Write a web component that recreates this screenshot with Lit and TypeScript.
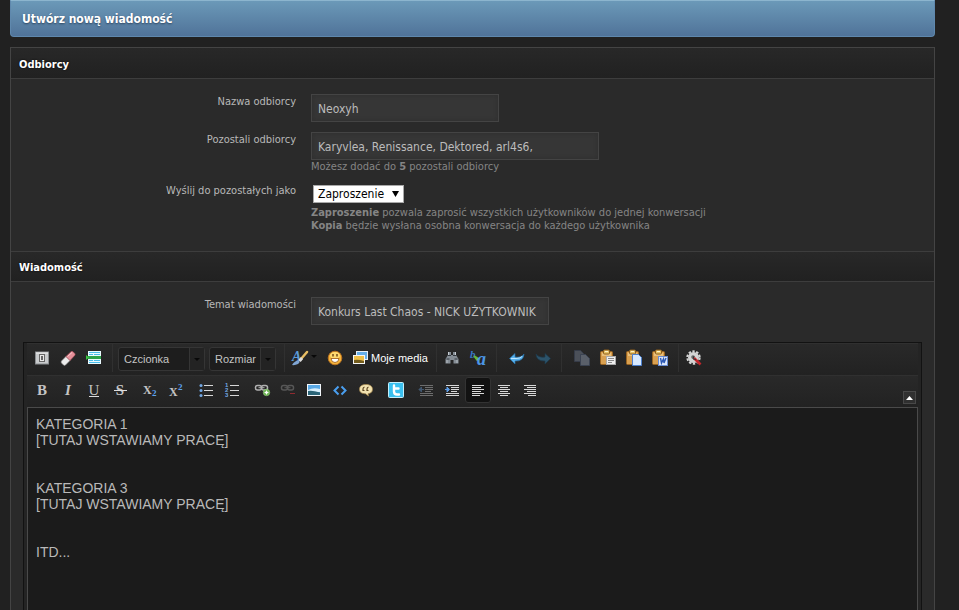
import { LitElement, html, css, svg, nothing, SVGTemplateResult, TemplateResult } from "lit";
import { customElement, property } from "lit/decorators.js";

const lines = (xs: number[][], color = "#d8d8d8") =>
  xs.map(([x, y, w]) => svg`<rect x=${x} y=${y} width=${w} height="1" fill=${color} />`);

const glyph = (t: string, weight = "normal", slant = "normal") =>
  svg`<text x="10" y="15" text-anchor="middle" font-family="Liberation Serif, serif" font-size="15" fill="#c4c4c4" font-weight=${weight} font-style=${slant}>${t}</text>`;

const clipboard = svg`
  <rect x="2.5" y="3.5" width="12" height="13" rx="1" fill="#d9a050" stroke="#9a6420" />
  <rect x="4" y="5" width="9" height="3" fill="#e9c07c" />
  <rect x="5.5" y="2" width="6" height="4" rx="1" fill="#e8c468" stroke="#8a5c1c" />
  <rect x="7" y="3" width="3" height="1" fill="#fff3c8" />`;

const chain = (c: string) => svg`
  <rect x="3.500" y="5.500" width="6" height="4.500" rx="2" fill="none" stroke=${c} stroke-width="1.500" />
  <rect x="9.500" y="5.500" width="6" height="4.500" rx="2" fill="none" stroke=${c} stroke-width="1.500" />
  <path d="M6.500 7.700h6" stroke=${c} />`;

const icons: Record<string, SVGTemplateResult> = {
  switch: svg`<rect x="3.5" y="4" width="13" height="12" fill="#c8cacc" stroke="#8b8e91" />
    <rect x="4" y="4.500" width="12" height="1" fill="#f4f4f4" />
    <rect x="7.500" y="6.500" width="5" height="7" fill="#e8e8e8" stroke="#666" />
    <rect x="9" y="8" width="2" height="4" fill="#666" />`,
  eraser: svg`<path d="M3.500 13 8 8.500l4 4-4.500 4.500q-1 .8-2 0l-2-2q-.8-1 0-2z" fill="#ececec" stroke="#999" stroke-width=".6" />
    <path d="M8 8.500 13 3.700q1-.8 2 0l1.700 1.700q.9 1 0 2L12 12.500z" fill="#e58f98" stroke="#b2525f" stroke-width=".6" />
    <path d="m9.500 8.500 4.500-4" stroke="#f8c9cd" />`,
  lines: svg`<rect x="4" y="3" width="13" height="13" fill="#eafaff" />
    <path d="M5 4.500h11M5 6.500h4M10 6.500h6M5 12.500h4M10 12.500h6M5 14.500h11" stroke="#49bde9" />
    <rect x="4" y="8" width="13" height="3" fill="#2ca34a" />
    <path d="M2 7v5l3-2.500z" fill="#37c53f" />`,
  bold: glyph("B", "bold"),
  italic: glyph("I", "bold", "italic"),
  underline: svg`${glyph("U")}<rect x="5" y="16" width="10" height="1" fill="#ddd" />`,
  strike: svg`${glyph("S", "bold")}<rect x="4" y="10" width="13" height="1" fill="#ddd" />`,
  sub: svg`<text x="3" y="14" font-family="Liberation Serif, serif" font-weight="bold" font-size="12" fill="#c4c4c4">X</text>
    <text x="12" y="16" font-family="Liberation Serif, serif" font-weight="bold" font-size="9" fill="#5da2ee">2</text>`,
  sup: svg`<text x="3" y="16" font-family="Liberation Serif, serif" font-weight="bold" font-size="12" fill="#c4c4c4">X</text>
    <text x="12" y="10" font-family="Liberation Serif, serif" font-weight="bold" font-size="9" fill="#5da2ee">2</text>`,
  ul: svg`<circle cx="5" cy="5.500" r="1.500" fill="#73a8e4" /><circle cx="5" cy="10.500" r="1.500" fill="#73a8e4" /><circle cx="5" cy="15.500" r="1.500" fill="#73a8e4" />
    ${lines([[8, 5, 9], [8, 10, 9], [8, 15, 9]])}`,
  ol: svg`<g font-family="Liberation Sans, sans-serif" font-size="6" font-weight="bold" fill="#73a8e4"><text x="3" y="7">1</text><text x="3" y="12">2</text><text x="3" y="17">3</text></g>
    ${lines([[8, 5, 9], [8, 10, 9], [8, 15, 9]])}`,
  link: svg`${chain("#b0b0b0")}<circle cx="14.500" cy="12.500" r="3.200" fill="#57a83a" stroke="#a4d890" stroke-width=".6" /><path d="M12.500 12.500h4M14.500 10.500v4" stroke="#fff" stroke-width="1.300" />`,
  unlink: svg`<g opacity=".4">${chain("#a0a0a0")}</g><rect x="12" y="13" width="5" height="1" fill="#8f2a30" />`,
  image: svg`<rect x="3" y="4" width="14" height="12" fill="#f2f6fa" />
    <rect x="4" y="5" width="12" height="10" fill="#59a9e6" />
    <path d="M4 10q5-3 12-1v3H4z" fill="#d9effc" /><path d="M4 11q4-1 12 1.500v2.500H4z" fill="#2b6477" />`,
  code: svg`<path d="m8.500 6.500-4 4 4 4M11.500 6.500l4 4-4 4" fill="none" stroke="#4a9ff0" stroke-width="2" />`,
  quote: svg`<path d="M10 4.500c4 0 6.500 1.800 6.500 4.800s-2 4-4.500 4.400l.5 2.300-3-2.300C6 13.700 3.500 12.500 3.500 9.300S6 4.500 10 4.500z" fill="#f2e2b0" stroke="#a98a4c" stroke-width=".7" />
    <path d="M8.500 7q-1.500.5-1.500 2v1.500h1.500M12.500 7q-1.500.5-1.500 2v1.500h1.500" fill="none" stroke="#5a4420" stroke-width="1.200" />`,
  twitter: svg`<rect x="2.500" y="2.500" width="15" height="15" rx="1" fill="#3bc0ef" stroke="#c4effc" />
    <path d="M8 5.500v6q0 3 3 3h2M8 8.500h4.500" fill="none" stroke="#fff" stroke-width="2.400" stroke-linecap="round" />`,
  outdent: svg`<g opacity=".4">${lines([[4, 5, 13], [9, 7, 8], [9, 9, 8], [9, 11, 6], [4, 13, 13], [4, 15, 13]])}<path d="M3 9.500h5M5.500 7v5L3 9.500z" stroke="#6ba2de" fill="#6ba2de" /></g>`,
  indent: svg`${lines([[4, 5, 13], [9, 7, 8], [9, 9, 8], [9, 11, 6], [4, 13, 13], [4, 15, 13]])}<path d="M3 9.500h4M5 7l2.500 2.500L5 12z" stroke="#5c9be4" fill="#5c9be4" />`,
  left: svg`${lines([[4, 5, 12], [4, 7, 9], [4, 9, 12], [4, 11, 9], [4, 13, 12], [4, 15, 8]])}`,
  center: svg`${lines([[4, 5, 12], [6, 7, 8], [4, 9, 12], [6, 11, 8], [4, 13, 12], [6, 15, 8]])}`,
  right: svg`${lines([[4, 5, 12], [7, 7, 9], [4, 9, 12], [7, 11, 9], [4, 13, 12], [8, 15, 8]])}`,
  color: svg`<text x="2" y="13" font-family="Liberation Serif, serif" font-style="italic" font-weight="bold" font-size="14" fill="#5b9bd9">A</text>
    <path d="m17 4-6 7" stroke="#e8bd63" stroke-width="2.500" stroke-linecap="round" /><path d="m12 10-2.500 3" stroke="#ddd" stroke-width="3" />
    <path d="M2 17q3-5 7-4.500 1.500 1.500-1 3.500-3 1.500-6 1z" fill="#7fa5d4" />`,
  smile: svg`<circle cx="10" cy="10" r="6.800" fill="#f6b53c" stroke="#bd7420" /><ellipse cx="10" cy="7.500" rx="5" ry="3.500" fill="#ffda70" />
    <path d="M8 6v2.500M12 6v2.500" stroke="#6a4010" stroke-width="1.400" /><path d="M6 10.500h8q-.5 4-4 4t-4-4z" fill="#fff" stroke="#99560e" stroke-width=".8" />`,
  media: svg`<rect x="5.500" y="3.500" width="11" height="8" fill="#65aee8" stroke="#e8eef4" />
    <rect x="2.500" y="7.500" width="11" height="8" fill="#efc04a" stroke="#f6f6f6" /><path d="M3 12q4-1 10 1v2H3z" fill="#735c1c" />`,
  find: svg`<path d="M6 4h3v3h2V4h3v3l2.500 4v4.500h-5V12h-3v3.500h-5V11L6 7z" fill="#858d95" /><path d="M6 7.500h3M11 7.500h3M4.500 11h3M12.500 11h3" stroke="#343a40" />
    <path d="M6.500 4v3M13.500 4v3" stroke="#c5ccd2" /><path d="M5 12v3M15 12v3" stroke="#b4bbc1" />`,
  replace: svg`<text x="2" y="10" font-family="Liberation Serif, serif" font-style="italic" font-weight="bold" font-size="11" fill="#3977c8">b</text>
    <path d="m6 8 5 3-2 1z" stroke="#65b83d" stroke-width="1.500" />
    <text x="9" y="17" font-family="Liberation Serif, serif" font-style="italic" font-weight="bold" font-size="18" fill="#4c96e6">a</text>`,
  undo: svg`<path d="M2.500 10.500 8 5.500V9q6 1 9-3-.5 7.500-9 7v3z" fill="#58b1ec" stroke="#2670a8" stroke-width=".7" /><path d="M4 10.500h5q4 0 6-2" stroke="#bde5ff" fill="none" />`,
  redo: svg`<path d="M17.500 10.500 12 5.500V9q-6 1-9-3 .5 7.500 9 7v3z" fill="#2c536a" stroke="#1c3a4c" stroke-width=".7" />`,
  copy: svg`<path d="M2.500 2.500h6l3 3v8h-9z" fill="#4b5059" stroke="#363c49" /><path d="M8.500 6.500h5l4 4v7h-9z" fill="#5a606a" stroke="#3b4352" />`,
  paste: svg`${clipboard}<rect x="8.500" y="8.500" width="9" height="8" fill="#eee" stroke="#aaa" /><path d="M10 10.500h6M10 12.500h6M10 14.500h4" stroke="#888" />`,
  pasteText: svg`${clipboard}<path d="M8.500 6.500h6l3 3v8h-9z" fill="#d7e9ff" stroke="#4c80ce" />`,
  pasteWord: svg`${clipboard}<rect x="8.500" y="8.500" width="9" height="9" fill="#dce8fc" stroke="#6a8cd2" /><path d="m10.500 10 1 5 2-4 .5 4 2-5" fill="none" stroke="#2c58b4" stroke-width="1.400" />`,
  gear: svg`<circle cx="9.500" cy="9.500" r="5.500" fill="#d4d4d4" /><circle cx="9.500" cy="9.500" r="6.200" fill="none" stroke="#d4d4d4" stroke-width="2" stroke-dasharray="2.400 1.500" />
    <circle cx="9" cy="9" r="1.800" fill="#666" /><path d="m10 10 6.500 6.500" stroke="#c3262c" stroke-width="2.600" /><path d="m10 8-1 3 3 .5" stroke="#333" fill="none" />`,
};

@customElement("tool-button")
export class ToolButton extends LitElement {
  @property() icon = "";
  @property() name = "";
  @property() text = "";
  @property({ type: Boolean }) menu = false;
  @property({ type: Boolean }) active = false;

  static styles = css`
    :host { display: block; flex: none; }
    button {
      display: flex; align-items: center; justify-content: center;
      min-width: 26px; height: 26px; padding: 0 2px; border: 1px solid transparent; border-radius: 3px;
      background: none; color: #fff; font: 11px "Liberation Sans", Arial, sans-serif; white-space: nowrap;
    }
    button.active { background: #121212; border-color: #333; }
    svg { flex: none; display: block; }
  `;

  render() {
    return html`<button type="button" class=${this.active ? "active" : ""} aria-label=${this.name}>
      <svg width="20" height="20" viewBox="0 0 20 20">${icons[this.icon]}</svg>${this.text || nothing}
      ${this.menu ? html`<svg width="9" height="20" viewBox="0 0 9 20"><path d="M1 7h6L4 10z" fill="#080808" /></svg>` : nothing}
    </button>`;
  }
}

const tool = (icon: string, name: string, active = false): TemplateResult =>
  html`<tool-button icon=${icon} name=${name} ?active=${active}></tool-button>`;

@customElement("app-root")
export class AppRoot extends LitElement {
  static styles = css`
    * { box-sizing: border-box; }
    :host {
      display: flex; flex-direction: column; min-height: 100vh; padding: 0 24px 0 10px;
      background: #212121; color: #b8b8b8;
      font: 11px/14px "DejaVu Sans Condensed", Tahoma, sans-serif;
    }
    h1, h2 { margin: 0; color: #fff; font-weight: bold; }
    h1 {
      height: 37px; padding: 0 11px; border: 1px solid #5f88ad; border-top-color: #8cb5ce; border-radius: 0 0 4px 4px;
      background: linear-gradient(#6b99b8, #507399); font-size: 12px; line-height: 36px; text-shadow: 0 1px 2px #2c4560;
    }
    h2 {
      height: 31px; padding: 0 8px; border-bottom: 1px solid #3d3d3d;
      background: linear-gradient(#282828, #212121); font-size: 11px; line-height: 33px; text-shadow: 0 0 2px #000;
    }
    form {
      flex: 1; display: flex; flex-direction: column; margin-top: 10px;
      border: 1px solid #444; border-bottom: 0; background: #2a2a2a;
    }
    .fields { display: grid; gap: 10px; padding: 15px 0 19px; }
    .subject { padding-bottom: 17px; }
    .next { border-top: 1px solid #3d3d3d; line-height: 31px; }
    .row { display: grid; grid-template-columns: 285px minmax(0, 1fr); column-gap: 15px; }
    .row > label { padding-top: 1px; text-align: right; }
    .box {
      display: block; width: 188px; max-width: 100%; height: 28px; padding: 2px 6px 0; border: 1px solid #444;
      background: #363636; box-shadow: inset 0 0 4px #2e2e2e; color: #bcbcbc;
      font: 12px "DejaVu Sans Condensed", Tahoma, sans-serif;
    }
    .long { width: 288px; }
    .medium { width: 238px; }
    .hint { margin: 0; color: #858585; line-height: 13px; }
    .pick { display: inline-grid; align-items: center; vertical-align: top; }
    .pick > * { grid-area: 1 / 1; }
    .pick select { appearance: none; border: 1px solid #a9a9a9; }
    .pick svg { justify-self: end; pointer-events: none; }
    .mode { margin: 2px 2px 3px; width: 91px; }
    .mode select { height: 18px; padding: 0 4px; background: #fff; color: #000; font: 12px "DejaVu Sans Condensed", Tahoma, sans-serif; }
    .mode svg { margin-right: 5px; }
    .editor {
      flex: 1; display: flex; flex-direction: column; margin: 0 12px; padding: 0 3px;
      border: 1px solid #121212; border-bottom: 0; background: #242424;
    }
    .bar { display: flex; align-items: center; height: 32px; padding: 0 0 3px 2px; background: linear-gradient(#292929, #222); border-top: 1px solid #303030; }
    .second { gap: 4px; }
    .group { display: flex; align-items: center; }
    .first .group { height: 28px; padding: 0 5px 0 2px; border-right: 1px solid #303030; }
    .first .group:first-child { padding: 0 5px 0 0; }
    .first .group:last-child { border: 0; }
    .first .combos { gap: 4px; padding: 2px 8px 0 5px; }
    .first .spaced { padding-left: 7px; }
    .combo { width: 87px; }
    .combo.size { width: 67px; }
    .combo select {
      height: 24px; padding: 0 5px; border-color: #353535; border-radius: 3px;
      background: #1d1d1d; color: #c4c4c4; font: 11px "Liberation Sans", Arial, sans-serif;
    }
    .combo svg { margin-right: 1px; }
    .collapse {
      display: grid; place-items: center; align-self: flex-end; margin-left: auto;
      width: 13px; height: 13px; padding: 0; border: 1px solid #484848; background: #303030;
    }
    .second { padding-right: 2px; }
    textarea {
      flex: 1; min-height: 160px; width: 100%; margin: 0; padding: 8px; border: 1px solid #4a4a4a; border-bottom: 0; resize: none;
      background: #1b1b1b; color: #b9b9b9; font: 14px/16px "Liberation Sans", Arial, sans-serif;
    }
  `;

  private combo(label: string, cls: string) {
    return html`<span class="pick combo ${cls}">
      <select aria-label=${label}><option>${label}</option></select>
      <svg width="15" height="22" viewBox="0 0 15 22"><rect width="15" height="22" fill="#232323" /><path d="M.5 0v22" stroke="#353535" /><path d="M5 10h6l-3 3z" fill="#080808" /></svg>
    </span>`;
  }

  render() {
    return html`
      <h1>Utwórz nową wiadomość</h1>
      <form>
        <h2>Odbiorcy</h2>
        <div class="fields">
          <div class="row">
            <label for="to">Nazwa odbiorcy</label>
            <div><input class="box" id="to" type="text" value="Neoxyh" /></div>
          </div>
          <div class="row">
            <label for="others">Pozostali odbiorcy</label>
            <div>
              <input class="box long" id="others" type="text" value="Karyvlea, Renissance, Dektored, arl4s6," />
              <p class="hint">Możesz dodać do <b>5</b> pozostali odbiorcy</p>
            </div>
          </div>
          <div class="row">
            <label for="mode">Wyślij do pozostałych jako</label>
            <div>
              <span class="pick mode">
                <select id="mode"><option>Zaproszenie</option><option>Kopia</option></select>
                <svg width="8" height="8" viewBox="0 0 8 8"><path d="M1 1h7L4.500 7z" fill="#000" /></svg>
              </span>
              <p class="hint"><b>Zaproszenie</b> pozwala zaprosić wszystkich użytkowników do jednej konwersacji</p>
              <p class="hint"><b>Kopia</b> będzie wysłana osobna konwersacja do każdego użytkownika</p>
            </div>
          </div>
        </div>
        <h2 class="next">Wiadomość</h2>
        <div class="fields subject">
          <div class="row">
            <label for="subject">Temat wiadomości</label>
            <div><input class="box medium" id="subject" type="text" value="Konkurs Last Chaos - NICK UŻYTKOWNIK" /></div>
          </div>
        </div>
        <div class="editor">
          <div class="bar first">
            <div class="group">${tool("switch", "Tryb edytora")}${tool("eraser", "Usuń formatowanie")}${tool("lines", "Wstaw linię")}</div>
            <div class="group combos">${this.combo("Czcionka", "")}${this.combo("Rozmiar", "size")}</div>
            <div class="group">
              <tool-button icon="color" name="Kolor tekstu" menu></tool-button>
              ${tool("smile", "Emotikony")}
              <tool-button icon="media" name="Moje media" text="Moje media"></tool-button>
            </div>
            <div class="group">${tool("find", "Znajdź")}${tool("replace", "Zamień")}</div>
            <div class="group spaced">${tool("undo", "Cofnij")}${tool("redo", "Ponów")}</div>
            <div class="group spaced">${tool("copy", "Kopiuj")}${tool("paste", "Wklej")}${tool("pasteText", "Wklej jako tekst")}${tool("pasteWord", "Wklej z Worda")}</div>
            <div class="group">${tool("gear", "Narzędzia")}</div>
          </div>
          <div class="bar second">
            <div class="group">${tool("bold", "Pogrubienie")}${tool("italic", "Kursywa")}${tool("underline", "Podkreślenie")}${tool("strike", "Przekreślenie")}</div>
            <div class="group">${tool("sub", "Indeks dolny")}${tool("sup", "Indeks górny")}</div>
            <div class="group">${tool("ul", "Lista punktowana")}${tool("ol", "Lista numerowana")}</div>
            <div class="group">${tool("link", "Wstaw odnośnik")}${tool("unlink", "Usuń odnośnik")}${tool("image", "Obraz")}${tool("code", "Kod")}${tool("quote", "Cytat")}</div>
            <div class="group">${tool("twitter", "Twitter")}</div>
            <div class="group">${tool("outdent", "Zmniejsz wcięcie")}${tool("indent", "Zwiększ wcięcie")}${tool("left", "Do lewej", true)}${tool("center", "Wyśrodkuj")}${tool("right", "Do prawej")}</div>
            <button class="collapse" type="button" aria-label="Zwiń pasek"><svg width="7" height="4" viewBox="0 0 7 4"><path d="M0 4h7L3.500 0z" fill="#fff" /></svg></button>
          </div>
          <textarea aria-label="Treść wiadomości" spellcheck="false" .value=${"KATEGORIA 1\n[TUTAJ WSTAWIAMY PRACĘ]\n\n\nKATEGORIA 3\n[TUTAJ WSTAWIAMY PRACĘ]\n\n\nITD..."}></textarea>
        </div>
      </form>
    `;
  }
}
